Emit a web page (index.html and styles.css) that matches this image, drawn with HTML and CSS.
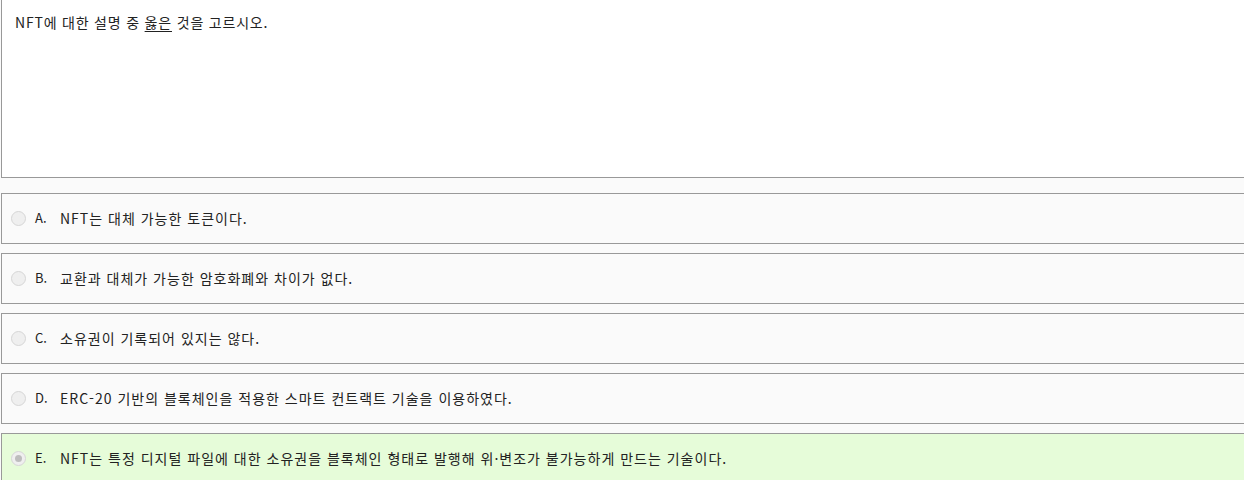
FILE: index.html
```html
<!DOCTYPE html>
<html lang="ko">
<head>
  <meta charset="UTF-8">
  <meta name="viewport" content="width=device-width, initial-scale=1.0">
  <title>NFT 문제</title>
  <link rel="stylesheet" href="styles.css">
</head>
<body>

<div class="quiz">
  <div class="question">
    NFT에 대한 설명 중 <u>옳은</u> 것을 고르시오.
  </div>

  <ul class="choices">
    <li class="choice">
      <span class="radio"></span>
      <span class="letter">A.</span>
      <span class="text">NFT는 대체 가능한 토큰이다.</span>
    </li>
    <li class="choice">
      <span class="radio"></span>
      <span class="letter">B.</span>
      <span class="text">교환과 대체가 가능한 암호화폐와 차이가 없다.</span>
    </li>
    <li class="choice">
      <span class="radio"></span>
      <span class="letter">C.</span>
      <span class="text">소유권이 기록되어 있지는 않다.</span>
    </li>
    <li class="choice">
      <span class="radio"></span>
      <span class="letter">D.</span>
      <span class="text">ERC-20 기반의 블록체인을 적용한 스마트 컨트랙트 기술을 이용하였다.</span>
    </li>
    <li class="choice correct">
      <span class="radio checked"></span>
      <span class="letter">E.</span>
      <span class="text">NFT는 특정 디지털 파일에 대한 소유권을 블록체인 형태로 발행해 위·변조가 불가능하게 만드는 기술이다.</span>
    </li>
  </ul>
</div>

</body>
</html>
```

FILE: styles.css
```css
html, body {
  overflow: hidden;
}
body {
  margin: 0;
  background-color: #fafafa;
  font-family: "Noto Sans CJK KR", "Noto Sans", sans-serif;
  font-size: 14px;
  letter-spacing: 0.8px;
  color: #222;
}
.quiz {
  width: 1270px;
  margin-left: 1px;
}
.question {
  height: 164px;
  padding: 13px 0 0 13px;
  line-height: 18px;
  background-color: #fff;
  border: 1px solid #999;
  border-top: none;
}
.question u {
  text-underline-offset: 3px;
}
.choices {
  list-style: none;
  margin: 15px 0 0;
  padding: 0;
}
.choice {
  display: flex;
  align-items: center;
  height: 49px;
  margin-bottom: 9px;
  padding-left: 9px;
  border: 1px solid #999;
  background-color: #fafafa;
}
.choice.correct {
  background-color: #e6fcd9;
}
.radio {
  width: 13px;
  height: 13px;
  border: 1px solid #d6d6d6;
  border-radius: 50%;
  background-color: #efefef;
  position: relative;
}
.radio.checked::after {
  content: "";
  position: absolute;
  left: 3px;
  top: 3px;
  width: 7px;
  height: 7px;
  border-radius: 50%;
  background-color: #bdbdbd;
}
.letter {
  width: 25px;
  margin-left: 9px;
  margin-top: -3px;
  font-size: 13px;
  letter-spacing: 0;
}
.text {
  margin-top: -1px;
  line-height: 18px;
  letter-spacing: 1px;
}
```
